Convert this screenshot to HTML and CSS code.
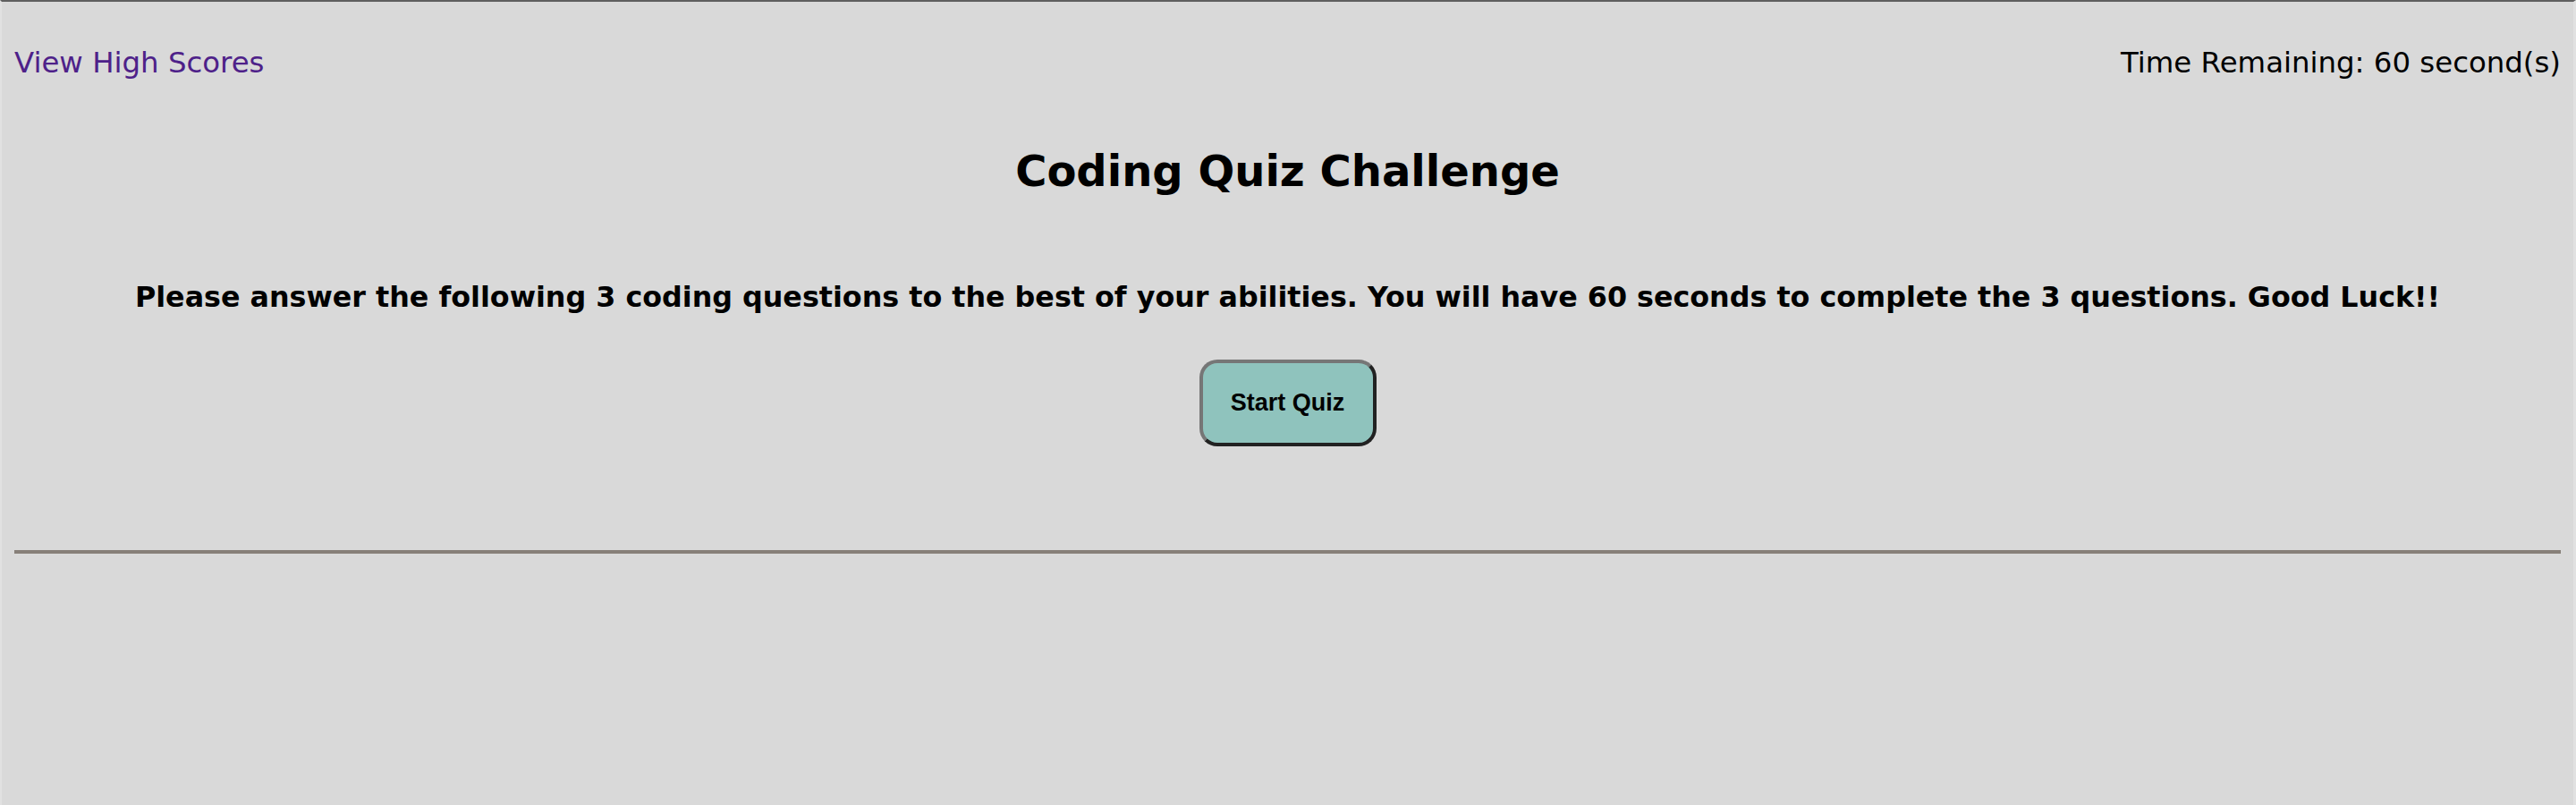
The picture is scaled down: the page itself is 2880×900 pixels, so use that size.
FILE: index.html
```html
<!DOCTYPE html>
<html lang="en">
<head>
<meta charset="utf-8">
<title>Coding Quiz Challenge</title>
<link rel="stylesheet" href="styles.css">
</head>
<body>
<div class="page">
  <header class="topbar">
    <a class="scores-link" href="#">View High Scores</a>
    <div class="timer">Time Remaining: <span>60</span> second(s)</div>
  </header>
  <main class="quiz">
    <h1 class="title">Coding Quiz Challenge</h1>
    <p class="intro">Please answer the following 3 coding questions to the best of your abilities. You will have 60 seconds to complete the 3 questions. Good Luck!!</p>
    <button class="start-btn" type="button">Start Quiz</button>
  </main>
  <hr class="divider">
</div>
</body>
</html>
```
FILE: styles.css
```css
html {
  margin: 0;
  padding: 0;
  height: 100%;
  background: #d9d9d9;
}
body {
  margin: 0;
  min-height: 100%;
  box-sizing: border-box;
  border-top: 2px solid #5f5f5f;
  border-left: 2px solid #e1e1e1;
  border-right: 3px solid #e1e1e1;
  background: #d9d9d9;
  font-family: "DejaVu Sans", Verdana, sans-serif;
  color: #000;
}
.page {
  padding: 0 14px;
}
.topbar {
  display: flex;
  justify-content: space-between;
  align-items: baseline;
  padding-top: 48px;
  font-size: 32.4px;
  line-height: 40px;
}
.scores-link {
  color: #4e2189;
  text-decoration: none;
}
.timer {
  color: #000;
}
.quiz {
  display: flex;
  flex-direction: column;
  align-items: center;
}
.title {
  margin: 71px 0 0;
  font-size: 48px;
  line-height: 60px;
  font-weight: bold;
}
.intro {
  margin: 91px 0 0;
  font-size: 31.75px;
  line-height: 40px;
  font-weight: bold;
  text-align: center;
}
.start-btn {
  margin-top: 50px;
  width: 198px;
  height: 97px;
  background: #8fc3bd;
  border: 4px solid;
  border-color: #767676 #222 #222 #767676;
  border-radius: 20px;
  font-family: "Liberation Sans", Arial, sans-serif;
  font-weight: bold;
  font-size: 27px;
  color: #000;
  padding: 0;
}
.divider {
  margin: 116px 0 0;
  border: 0;
  height: 4px;
  background: #878079;
}
```
